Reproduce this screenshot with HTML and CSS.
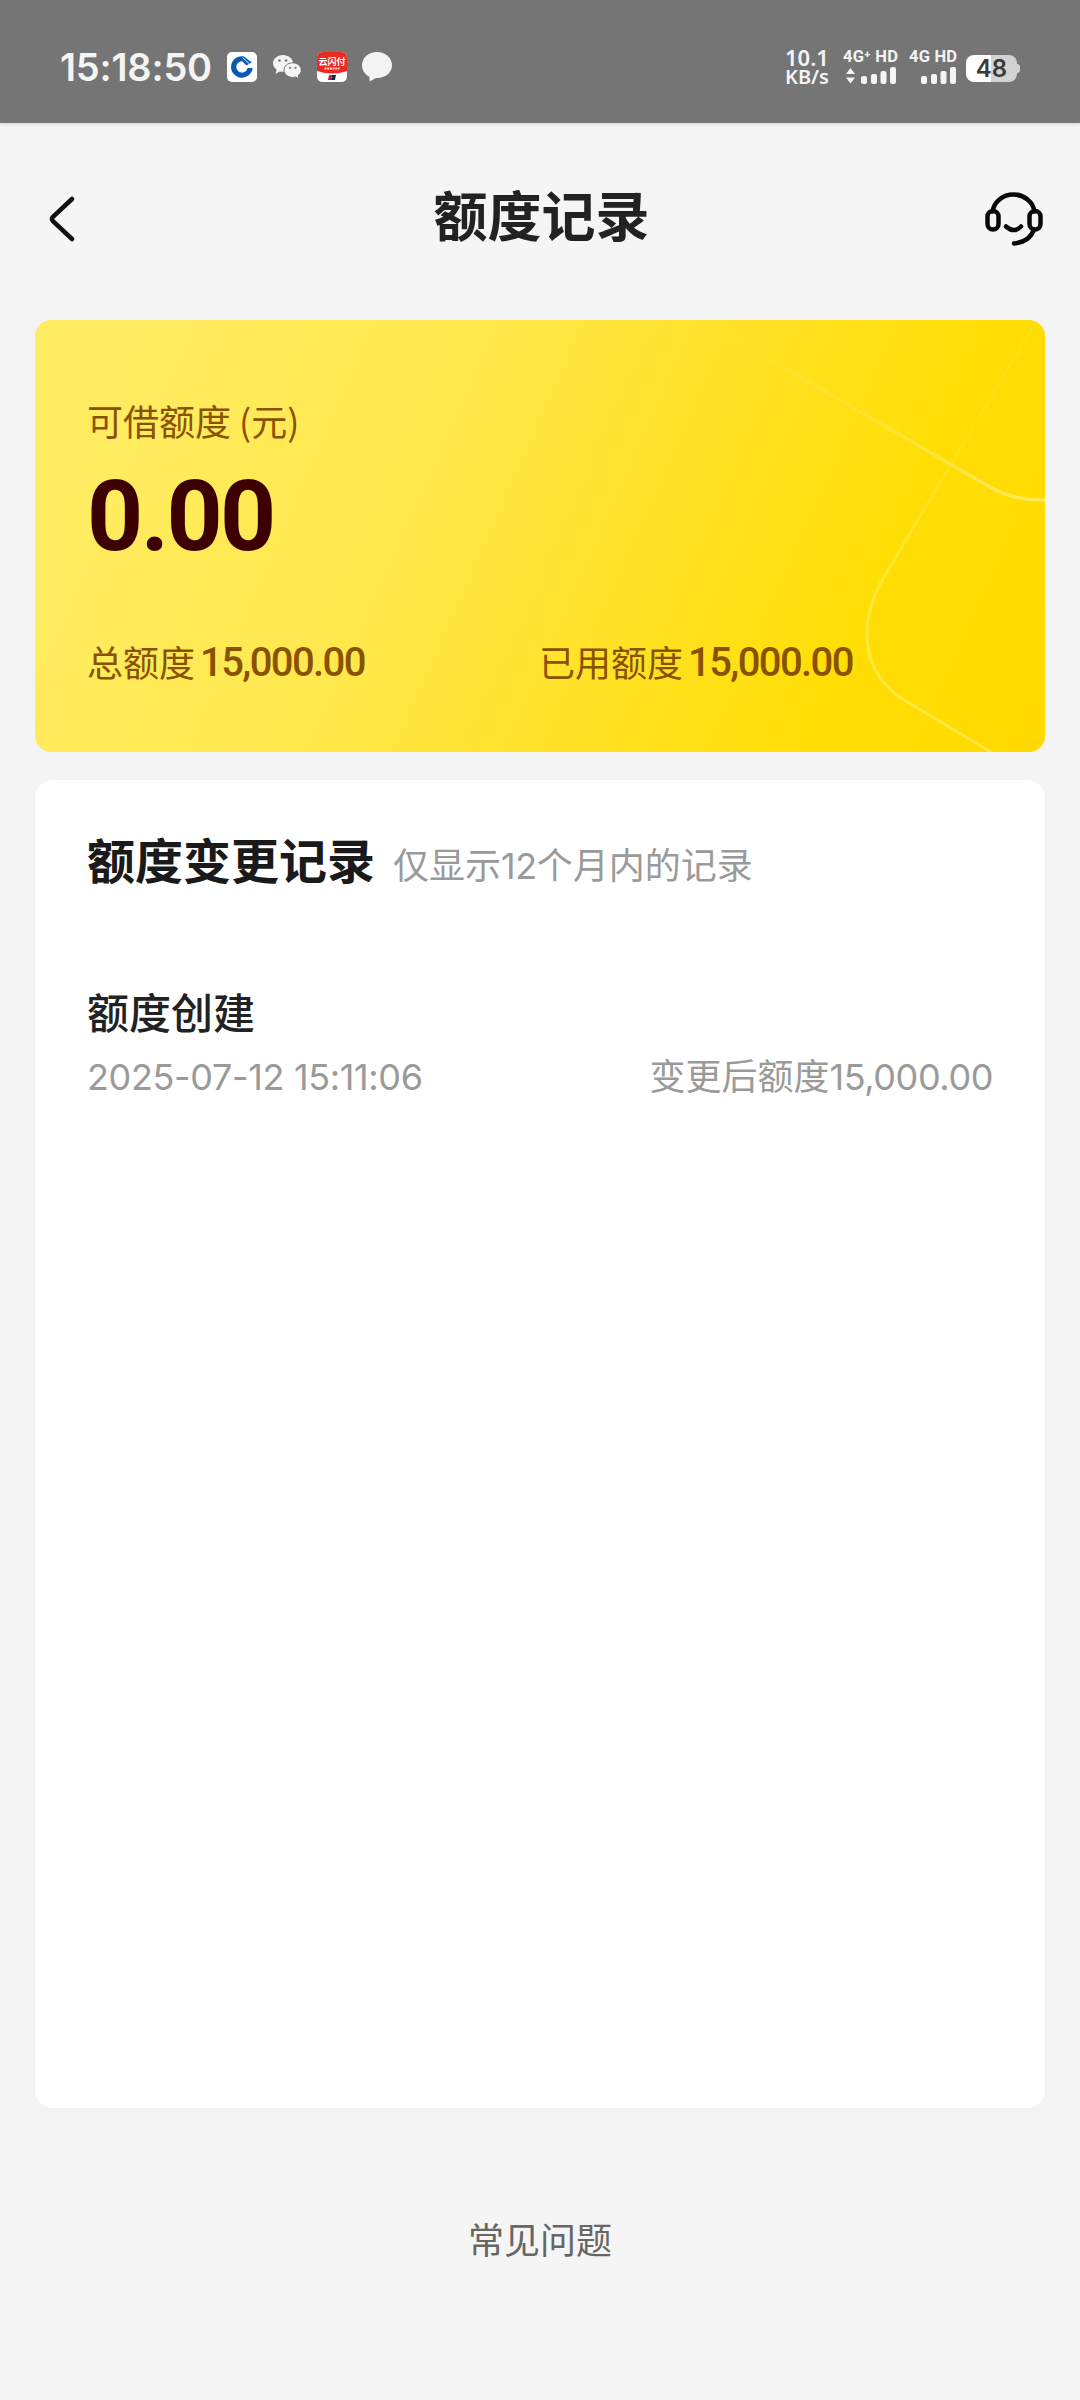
FILE: index.html
```
<!DOCTYPE html>
<html lang="zh-CN">
<head>
<meta charset="utf-8">
<title>额度记录</title>
<link rel="stylesheet" href="styles.css">
</head>
<body>
<header class="status">
  <div class="status-left">
    <span class="clock">15:18:50</span>
    <svg class="app" viewBox="0 0 30 30"><rect width="30" height="30" rx="5" fill="#fff"/><path d="M16.500 4.300A10.800 10.800 0 1 0 25.600 16H20.500a5.800 5.800 0 0 1-5.500 4.500A5.700 5.700 0 0 1 9.300 15 5.700 5.700 0 0 1 15 9.300l4.500 4.200L25.500 10z" fill="#0a5bb0"/><path d="M15 9.500l5.500 5.500-5.500 5.500L9.500 15z" fill="#fff"/><path d="M15.500 5.500l7 6.500M18.500 5l6.500 5.500" stroke="#fff" stroke-width=".9"/></svg>
    <svg class="app" viewBox="0 0 30 30"><path d="M11 3C5.500 3 1 6.700 1 11.300c0 2.600 1.400 4.700 3.600 6.200l-1 4.500 4-2.600c1 .3 2.200.4 3.400.4 5.500 0 10-3.800 10-8.500S16.500 3 11 3z" fill="#f4f4f4"/><path d="M20.500 10.800c-4.800 0-8.500 3.200-8.500 7.300s3.700 7.300 8.500 7.300c1 0 2-.1 3-.5l3.500 2-.8-3.300c2-1.400 3-3.300 3-5.500 0-4.100-3.900-7.300-8.700-7.300z" fill="#f4f4f4" stroke="#757575" stroke-width="1"/><g fill="#757575"><circle cx="7.500" cy="8.500" r="1.300"/><circle cx="14" cy="8.500" r="1.300"/><circle cx="18" cy="15.800" r="1.100"/><circle cx="23.500" cy="15.800" r="1.100"/></g></svg>
    <svg class="app" viewBox="0 0 30 30"><rect width="30" height="30" rx="5.500" fill="#fff"/><path d="M5.500 0h19A5.500 5.500 0 0 1 30 5.500V19q-15 5-30 0V5.500A5.500 5.500 0 0 1 5.500 0z" fill="#ec2a22"/><path d="M12 23h3l-1 5h-3z" fill="#c2185b"/><path d="M15 23h4l-1 5h-4z" fill="#04343c"/><text class="pay" x="15" y="13" text-anchor="middle">云闪付</text><path d="M7.500 16.500h15" stroke="#ffd3d0" stroke-width="1.800" stroke-dasharray="2 .7"/></svg>
    <svg class="app" viewBox="0 0 30 30"><path d="M15 0C6.700 0 0 5.500 0 13.200c0 5.200 3 9.300 7.500 11.600v4.700l6.500-3.500h1c8.300 0 15-5.200 15-12.800S23.300 0 15 0z" fill="#f4f4f4"/></svg>
  </div>
  <div class="status-right">
    <div class="speed"><span class="rate">10.1</span><span>KB/s</span></div>
    <div class="sim"><span>4G⁺ HD</span>
      <svg width="50" height="17" viewBox="0 0 50 17"><path d="M0 7l4.500-6L9 7zM0 10.500h9L4.500 16.500z"/><rect x="15" y="9" width="6" height="8" rx="2"/><rect x="25" y="7" width="6" height="10" rx="2"/><rect x="34.500" y="4" width="6" height="13" rx="2"/><rect x="44" y="0" width="6" height="17" rx="2"/></svg></div>
    <div class="sim second"><span>4G HD</span>
      <svg width="35" height="17" viewBox="15 0 35 17"><rect x="15" y="9" width="6" height="8" rx="2"/><rect x="25" y="7" width="6" height="10" rx="2"/><rect x="34.500" y="4" width="6" height="13" rx="2"/><rect x="44" y="0" width="6" height="17" rx="2"/></svg></div>
    <div class="battery"><span>48</span></div>
  </div>
</header>

<nav class="nav">
  <svg class="back" width="26" height="46" viewBox="0 0 26 46"><path d="M23 3L4 20.800q-2 2.200 0 4.400L23 43"/></svg>
  <h1>额度记录</h1>
  <svg class="service" width="58" height="54" viewBox="0 0 58 54"><path d="M7.500 19.500C9 10 17.500 2.500 28.500 2.500S48 10 49.500 19.500M49 37.500C46 46 39 50.500 29 51.500M21 34.500q8 7 15 0"/><rect x="2.500" y="19" width="11" height="18.500" rx="5.500"/><rect x="44.500" y="19" width="11" height="18.500" rx="5.500"/></svg>
</nav>

<main>
  <section class="quota">
    <svg class="lines" viewBox="0 0 1010 432" fill="none">
      <defs>
        <linearGradient id="fadeA" gradientUnits="userSpaceOnUse" x1="670" y1="0" x2="1010" y2="180"><stop offset="0" stop-color="#ffe650" stop-opacity="0"/><stop offset=".5" stop-color="#ffe445" stop-opacity=".6"/><stop offset="1" stop-color="#ffec5c"/></linearGradient>
        <linearGradient id="fadeB" gradientUnits="userSpaceOnUse" x1="990" y1="10" x2="850" y2="300"><stop offset="0" stop-color="#ffe640" stop-opacity=".2"/><stop offset=".4" stop-color="#ffe640" stop-opacity=".2"/><stop offset="1" stop-color="#ffe83e"/></linearGradient>
      </defs>
      <path d="M670 2L955 167Q980 181 1010 180" stroke="url(#fadeA)" stroke-width="3.500"/>
      <path d="M1002 0L849 257C824 300 824 349 866 378L956 432" stroke="url(#fadeB)" stroke-width="3"/>
    </svg>
    <p class="label">可借额度 (元)</p>
    <p class="amount">0.00</p>
    <div class="totals">
      <p><span>总额度</span><b>15,000.00</b></p>
      <p><span>已用额度</span><b>15,000.00</b></p>
    </div>
  </section>

  <section class="records">
    <div class="heading"><h2>额度变更记录</h2><span>仅显示<i>12</i>个月内的记录</span></div>
    <article>
      <h3>额度创建</h3>
      <div class="row"><time>2025-07-12 15:11:06</time><span>变更后额度<i>15,000.00</i></span></div>
    </article>
  </section>
</main>
<footer>常见问题</footer>
</body>
</html>
```
FILE: styles.css
```
* { box-sizing: border-box; margin: 0; padding: 0; }
body {
  width: 1080px; height: 2400px; overflow: hidden;
  background: #f5f5f5; color: #222;
  font-family: "Noto Sans CJK SC", sans-serif;
  display: flex; flex-direction: column;
}
svg, h1, h2, h3, p { flex: none; }
i { font-style: normal; font-family: Inter, sans-serif; line-height: 1; letter-spacing: -.4px; }

.status {
  height: 123px; flex: none; background: #757575; color: #f4f4f4;
  display: flex; justify-content: space-between;
  padding: 0 63px 0 60px;
  font-family: Inter, sans-serif; font-weight: 600;
  box-shadow: 0 2px 3px #ddd;
}
.status-left { display: flex; padding-top: 52px; }
.clock { width: 167px; font-size: 38px; line-height: 30px; letter-spacing: -.2px; white-space: nowrap; }
.app { width: 30px; height: 30px; margin-right: 15px; }
.pay { font: 700 9px "Noto Sans CJK SC", sans-serif; fill: #fff; }
.status-right { display: flex; padding-top: 48px; }
.speed { width: 58px; display: flex; flex-direction: column; font: 600 20px/20px "Noto Sans", sans-serif; white-space: nowrap; }
.speed .rate { font-size: 22px; line-height: 19px; }
.sim { width: 66px; display: flex; flex-direction: column; align-items: flex-start; font: 700 16.500px/17px Roboto, sans-serif; white-space: nowrap; }
.sim span { letter-spacing: .2px; }
.sim svg { margin-left: 3px; margin-top: 2px; fill: #f4f4f4; }
.sim.second { width: 57px; }
.sim.second svg { margin-left: 12px; }
.battery {
  position: relative; width: 51px; height: 27px; margin-top: 7px; border-radius: 8px;
  background: linear-gradient(90deg, #fff 49%, #d2d2d2 49%);
  color: #3a3a3a; font: 600 24px/28px Inter, sans-serif; text-align: center;
}
.battery::after { content: ""; position: absolute; left: 51px; top: 9px; width: 3px; height: 9px; border-radius: 0 3px 3px 0; background: #d2d2d2; }

.nav { height: 197px; flex: none; display: flex; justify-content: space-between; padding: 0 37px 0 49px; }
.nav h1 { font-size: 54px; font-weight: 700; line-height: 80px; margin-top: 51px; margin-left: 23px; }
.back { margin-top: 73px; fill: none; stroke: #111; stroke-width: 4.500; stroke-linecap: round; }
.service { margin-top: 69px; fill: none; stroke: #080808; stroke-width: 4.500; stroke-linecap: round; }

main { padding: 0 35px; display: flex; flex-direction: column; gap: 28px; }
.quota {
  position: relative; height: 432px; border-radius: 16px; overflow: hidden;
  padding: 74px 52px 0; color: #895200; box-shadow: 0 0 20px rgba(0,0,0,.02);
  background: linear-gradient(114deg, #ffec62 8%, #ffe84c 38%, #ffe32a 58%, #ffde05 80%, #ffd900 100%);
}
.lines { position: absolute; inset: 0; width: 1010px; height: 432px; }
.label { font-size: 36px; line-height: 52px; }
.amount { font: 700 98px/100px Roboto, sans-serif; color: #3d0000; margin-top: 21px; letter-spacing: -2.600px; }
.totals { display: flex; margin-top: 68px; }
.totals p { width: 452px; display: flex; gap: 5px; font-size: 36px; line-height: 52px; }
.totals b { font-family: Roboto, sans-serif; font-size: 40px; font-weight: 500; letter-spacing: -1.600px; position: relative; top: 2px; }
.records { height: 1328px; border-radius: 18px; background: #fff; padding: 43px 52px; box-shadow: 0 4px 24px rgba(0,0,0,.025); }
.heading { display: flex; align-items: baseline; gap: 18px; height: 72px; }
.heading h2 { font-size: 48px; line-height: 70px; font-weight: 700; color: #1a1a1a; }
.heading span { font-size: 36px; line-height: 52px; color: #9a9a9a; }
article h3 { font-size: 42px; line-height: 60px; font-weight: 500; margin-top: 86px; }
.row { display: flex; justify-content: space-between; font-size: 36px; line-height: 52px; color: #9a9a9a; margin-top: 7px; }
.row time { font-family: Inter, sans-serif; letter-spacing: -.35px; padding-top: 3px; }
footer { margin-top: 104px; text-align: center; font-size: 36px; line-height: 52px; color: #666; }
```
